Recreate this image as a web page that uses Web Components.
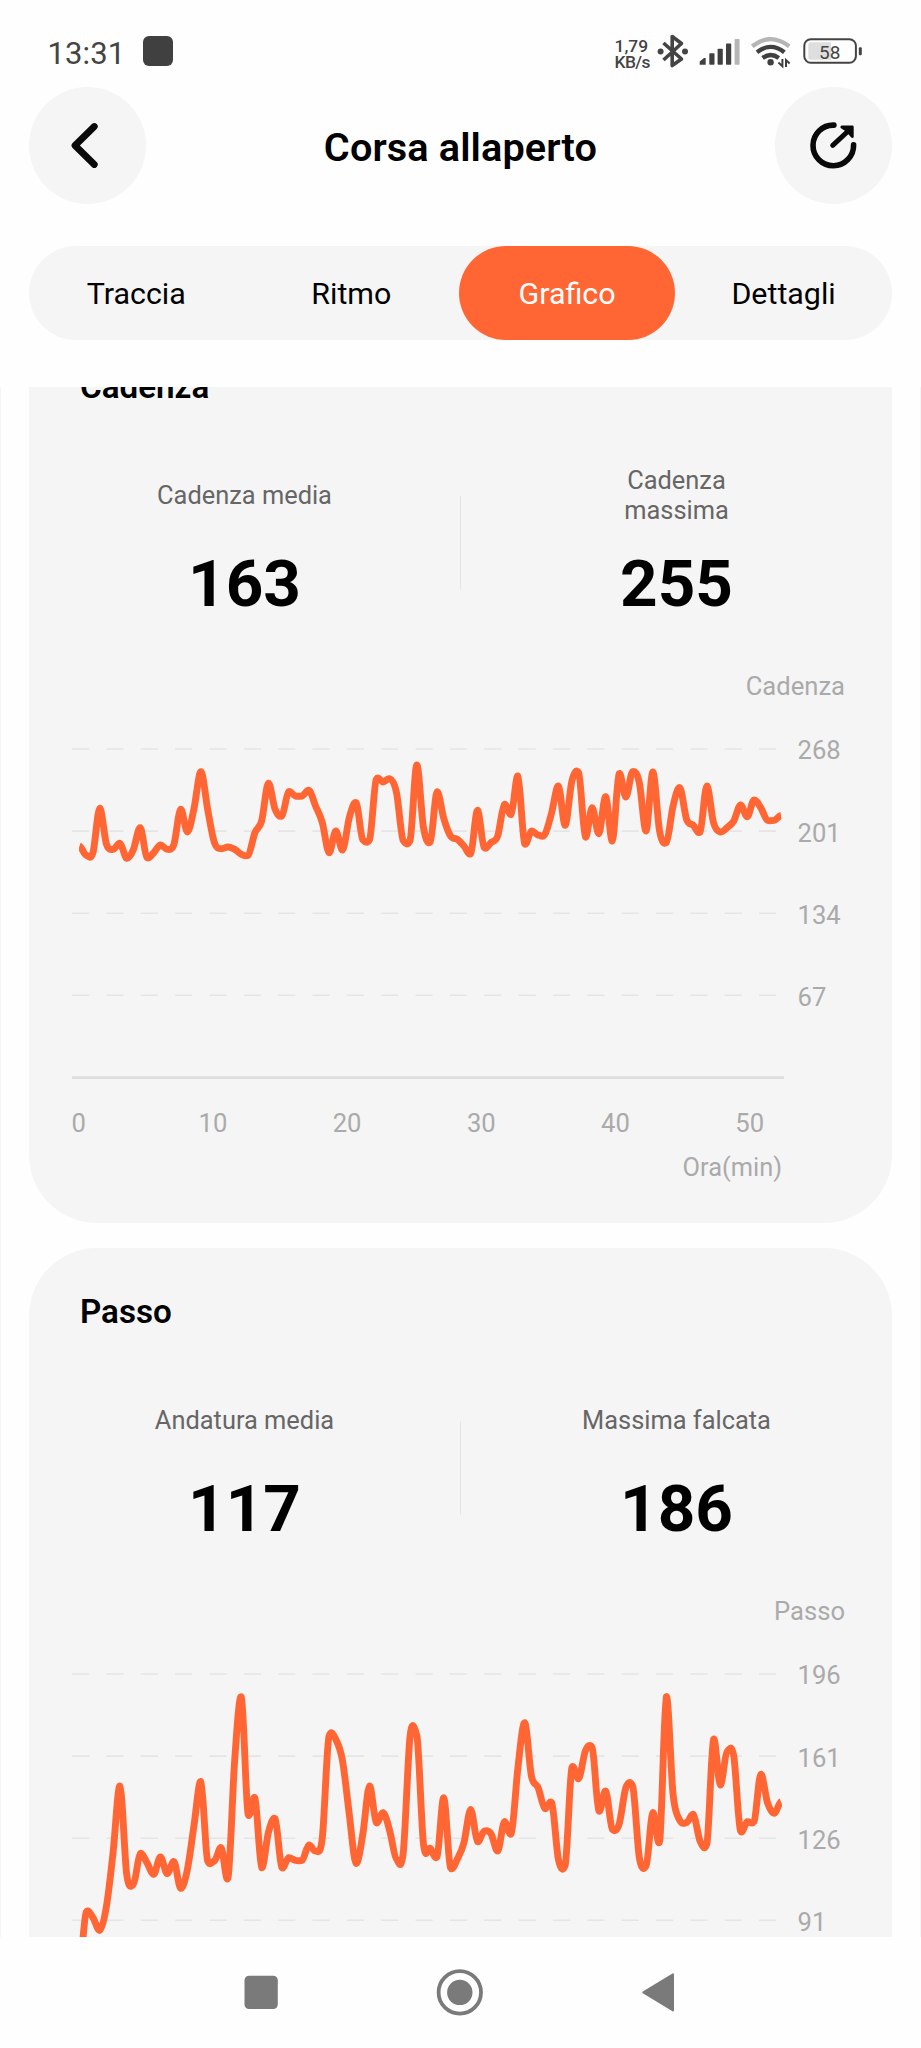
<!DOCTYPE html>
<html lang="it">
<head>
<meta charset="utf-8">
<title>Corsa allaperto</title>
<style>
html,body{margin:0;padding:0;background:#fefefe}
body{width:921px;height:2048px;overflow:hidden;font-family:Roboto,"Liberation Sans",sans-serif;color:#000}
</style>
</head>
<body>
<run-screen></run-screen>
<script>
function define(name, html, setup) {
  const tpl = document.createElement('template');
  tpl.innerHTML = html;
  customElements.define(name, class extends HTMLElement {
    connectedCallback() {
      if (this.shadowRoot) return;
      this.attachShadow({ mode: 'open' }).append(tpl.content.cloneNode(true));
      if (setup) setup(this, this.shadowRoot);
    }
  });
}

define('status-bar', `
<style>
:host{display:flex;height:86px;padding-left:47.5px;box-sizing:border-box;color:#444;align-items:flex-start}
svg{display:block}
.time{font-size:31px;line-height:36px;margin-top:35.5px;width:95px;letter-spacing:.1px}
.app{width:30px;height:30px;border-radius:6px;background:#404040;margin-top:36px}
.net{margin-left:442px;margin-top:38px;width:46px;font-size:17.4px;line-height:16px;font-weight:500;white-space:nowrap;letter-spacing:-.6px}
.net div{height:16px}
.net div:first-child{letter-spacing:0}
</style>
<div class="time">13:31</div><div class="app"></div>
<div class="net"><div>1,79</div><div>KB/s</div></div>
<svg width="266" height="86" viewBox="655 0 266 86" style="margin-left:-6.5px;flex:none">
 <g fill="none" stroke="#444" stroke-width="3.6" stroke-linejoin="round">
  <path d="M664.5 43 L682.5 59 L673.2 65.5 V36.5 L682.5 43.5 L664.5 60"/></g>
 <circle cx="661.6" cy="51.4" r="3" fill="#444"/><circle cx="686" cy="51.4" r="3" fill="#444"/>
 <g fill="#404040"><path d="M700.7 64.8V61.5L705 58H706.7V64.8Z"/><rect x="710.3" y="53.3" width="5.2" height="11.5" rx=".8"/><rect x="718.6" y="48.8" width="5.2" height="16" rx=".8"/><rect x="727" y="43.6" width="5.2" height="21.2" rx=".8"/></g>
 <rect x="735.6" y="39" width="5" height="25.8" rx=".8" fill="#b5b5b5"/>
 <g fill="none" stroke-width="4.3"><path d="M753.2 46.3 Q771.7 32 790.2 46.3" stroke="#b5b5b5"/><path d="M758 52.3 Q771.7 41.5 785.4 52.3" stroke="#404040"/><path d="M763.6 58 Q771.7 52 779.8 58" stroke="#404040"/></g>
 <circle cx="771.6" cy="62.2" r="3.2" fill="#404040"/>
 <path d="M783.4 59V66.2L779.4 62.6M787 67V60L790.6 63.4" fill="none" stroke="#404040" stroke-width="2"/>
 <rect x="805.3" y="39.2" width="51.6" height="23.6" rx="6.5" fill="none" stroke="#444" stroke-width="2"/>
 <path d="M812 42.3H832V59.7H812Q809.3 59.7 809.3 57V45Q809.3 42.3 812 42.3Z" fill="#dedede"/>
 <rect x="859.8" y="47.3" width="3" height="8" rx="1" fill="#444"/>
 <text x="830.7" y="59" text-anchor="middle" font-size="19" fill="#444">58</text>
</svg>`);

define('round-button', `
<style>:host{display:block;width:117px;height:117px;border-radius:50%;background:#f5f5f5;flex:none}</style><slot></slot>`);

define('app-header', `
<style>
:host{display:flex;justify-content:space-between;padding:0 29px;height:117px}
h1{margin:0;font-size:39.7px;line-height:46px;font-weight:600;padding-top:38px;white-space:nowrap;letter-spacing:.1px}
svg{display:block}
</style>
<round-button><svg width="117" height="117" viewBox="29 86.5 117 117"><path d="M94.3 126L75 145L94.3 164" fill="none" stroke="#0a0a0a" stroke-width="6.8" stroke-linecap="round" stroke-linejoin="round"/></svg></round-button>
<h1>Corsa allaperto</h1>
<round-button><svg width="117" height="117" viewBox="775.7 86.5 117 117"><g fill="none" stroke="#0a0a0a" stroke-width="5.6" stroke-linecap="round" stroke-linejoin="round"><path d="M834.6 124.6A20.3 20.3 0 1 0 854.3 144.4"/><path d="M833.4 144.8L850 129.5" stroke-width="5"/></g><path d="M842.5 126.5H853V136.2L849.5 132.2L846.7 129.4Z" fill="#0a0a0a" stroke="#0a0a0a" stroke-width="2.8" stroke-linejoin="round"/></svg></round-button>`);

define('tab-item', `
<style>
:host{display:block;text-align:center;height:94px;line-height:96px;border-radius:47px;font-size:30.4px}
:host([active]){background:#ff6633;color:#fff}
</style><slot></slot>`);

define('tab-bar', `
<style>:host{display:grid;grid-template-columns:214.5px 215.6px 216px 1fr;margin:42px 29px 0;height:94px;border-radius:47px;background:#f5f5f5}</style><slot></slot>`);

define('stat-cell', `
<style>
:host{display:flex;flex-direction:column;align-items:center}
.l{height:59px;display:flex;align-items:center;justify-content:center;text-align:center;font-size:25.4px;line-height:29.5px;color:#666;max-width:192px}
.v{font-size:65.6px;line-height:80px;font-weight:700;margin-top:18.5px}
</style>
<div class="l"><span><slot></slot></span></div><div class="v"></div>`,
(el, root) => { root.querySelector('.v').textContent = el.getAttribute('value'); });

define('stat-pair', `
<style>
:host{display:grid;grid-template-columns:1fr 1px 1fr;height:196px;padding-top:59.5px;box-sizing:border-box}
i{background:#e6e6e6;height:94px;margin-top:30px}
::slotted(:last-child){grid-column:3;grid-row:1}
</style><slot></slot><i style="grid-column:2;grid-row:1"></i>`);

define('line-chart', `<style>:host{display:block}svg{display:block}</style><div></div>`, (el, root) => {
  const ticks = el.getAttribute('ticks').split(',');
  const ys = el.getAttribute('points').trim().split(/[\s,]+/).map(Number);
  const off = Number(el.getAttribute('offset'));
  const pts = ys.map((y, i) => [79.5 + i * 6.745, off + y / 3]);
  const at = i => pts[Math.max(0, Math.min(pts.length - 1, i))];
  // Tangents are eased at local peaks and troughs so the curve does not overshoot them.
  const slope = i => {
    const p = at(i - 1)[1], q = at(i)[1], r = at(i + 1)[1];
    return (r - p) * ((q - p) * (r - q) <= 0 ? .07 : .17);
  };
  let d = `M${pts[0]}`;
  for (let i = 1; i < pts.length; i++) {
    const b = at(i - 1), c = at(i);
    d += `C${b[0] + 2.2} ${b[1] + slope(i - 1)} ${c[0] - 2.2} ${c[1] - slope(i)} ${c[0]} ${c[1]}`;
  }
  const grid = ticks.map((t, i) => {
    const y = 86 + i * 82.1;
    return `<line x1="72" x2="784" y1="${y}" y2="${y}" stroke="#e5e5e5" stroke-width="1.6" stroke-dasharray="17.2 17.15"/><text x="797.5" y="${y + 10.4}">${t}</text>`;
  }).join('');
  const xs = [0, 10, 20, 30, 40, 50].map(m => `<text x="${78.7 + m * 13.42}" y="468.5" text-anchor="middle">${m}</text>`).join('');
  const axis = el.hasAttribute('axis') ? `<line x1="72" x2="784" y1="414.6" y2="414.6" stroke="#dedede" stroke-width="2.6"/>${xs}<text x="782" y="512.5" text-anchor="end" font-size="25.4">Ora(min)</text>` : '';
  root.querySelector('div').innerHTML = `<svg width="863" height="560" viewBox="29 0 863 560" font-size="25.6" fill="#aaa">
  <clipPath id="c"><rect x="79" y="40" width="703" height="374"/></clipPath>
  <text x="845" y="31.5" text-anchor="end">${el.getAttribute('unit')}</text>${grid}${axis}
  <path d="${d}" clip-path="url(#c)" fill="none" stroke="#ff6633" stroke-width="6.9" stroke-linejoin="round"/></svg>`;
});

define('chart-card', `
<style>
:host{display:block;height:900px;width:863px;margin:0 auto;border-radius:68px;background:#f5f5f5;overflow:hidden}
h2{margin:0;padding:44px 0 0 51px;font-size:33.2px;line-height:40px;font-weight:600}
.s{height:256px}
</style>
<h2></h2><div class="s"><slot name="stats"></slot></div><slot></slot>`,
(el, root) => { root.querySelector('h2').textContent = el.getAttribute('heading'); });

define('scroll-area', `
<style>
:host{display:block;height:1550px;margin-top:47.5px;overflow:hidden;box-sizing:border-box;border:solid #f5f5f5;border-width:0 1px}
.in{display:grid;gap:25px;margin-top:-64.5px}
</style><div class="in"><slot></slot></div>`);

define('nav-bar', `
<style>:host{display:block;height:111px}svg{display:block}</style>
<svg width="921" height="111" viewBox="0 1937 921 111" fill="#7a7a7a"><rect x="244.5" y="1975.7" width="33.3" height="33.3" rx="4.5"/><circle cx="459.8" cy="1992.4" r="21.2" fill="none" stroke="#7a7a7a" stroke-width="3.8"/><circle cx="459.8" cy="1992.4" r="12.7"/><path d="M643.3 1992.4L673 1974.3V2010.5Z" stroke="#7a7a7a" stroke-width="2" stroke-linejoin="round"/></svg>`);

define('run-screen', `
<style>:host{display:flex;flex-direction:column;width:921px;height:2048px}app-header{margin-top:.5px}</style>
<status-bar></status-bar>
<app-header></app-header>
<tab-bar><tab-item>Traccia</tab-item><tab-item>Ritmo</tab-item><tab-item active>Grafico</tab-item><tab-item>Dettagli</tab-item></tab-bar>
<scroll-area>
 <chart-card heading="Cadenza">
  <stat-pair slot="stats"><stat-cell value="163">Cadenza media</stat-cell><stat-cell value="255">Cadenza<br>massima</stat-cell></stat-pair>
  <line-chart axis unit="Cadenza" ticks="268,201,134,67" offset="68" points="345 373 365 232 340 355 337 382 355 290 380 365 342 355 340 235 303 230 122 235 335 353 348 355 370 373 305 270 157 235 255 182 195 195 178 225 275 365 300 357 260 215 326 326 145 153 143 185 329 329 102 290 333 183 262 315 325 345 368 238 350 335 315 220 250 135 338 300 312 310 245 165 283 150 125 318 230 308 197 330 128 198 122 155 300 123 300 335 225 170 265 283 303 165 275 303 290 270 222 257 207 230 268 268 253"></line-chart>
 </chart-card>
 <chart-card heading="Passo">
  <stat-pair slot="stats"><stat-cell value="117">Andatura media</stat-cell><stat-cell value="186">Massima falcata</stat-cell></stat-pair>
  <line-chart unit="Passo" ticks="196,161,126,91" offset="63" points="950 783 800 838 765 600 405 670 700 608 635 670 618 668 632 712 655 520 392 630 630 590 682 330 138 490 440 650 545 503 650 620 628 628 582 600 560 255 265 330 490 637 550 405 515 485 540 625 605 258 253 580 592 618 440 650 625 575 475 572 540 548 600 512 548 350 215 375 410 473 455 625 643 350 383 300 290 480 420 535 520 410 405 620 645 485 572 137 430 508 515 490 570 580 265 402 302 315 540 512 512 370 455 487 452"></line-chart>
 </chart-card>
</scroll-area>
<nav-bar></nav-bar>`);
</script>
</body>
</html>
